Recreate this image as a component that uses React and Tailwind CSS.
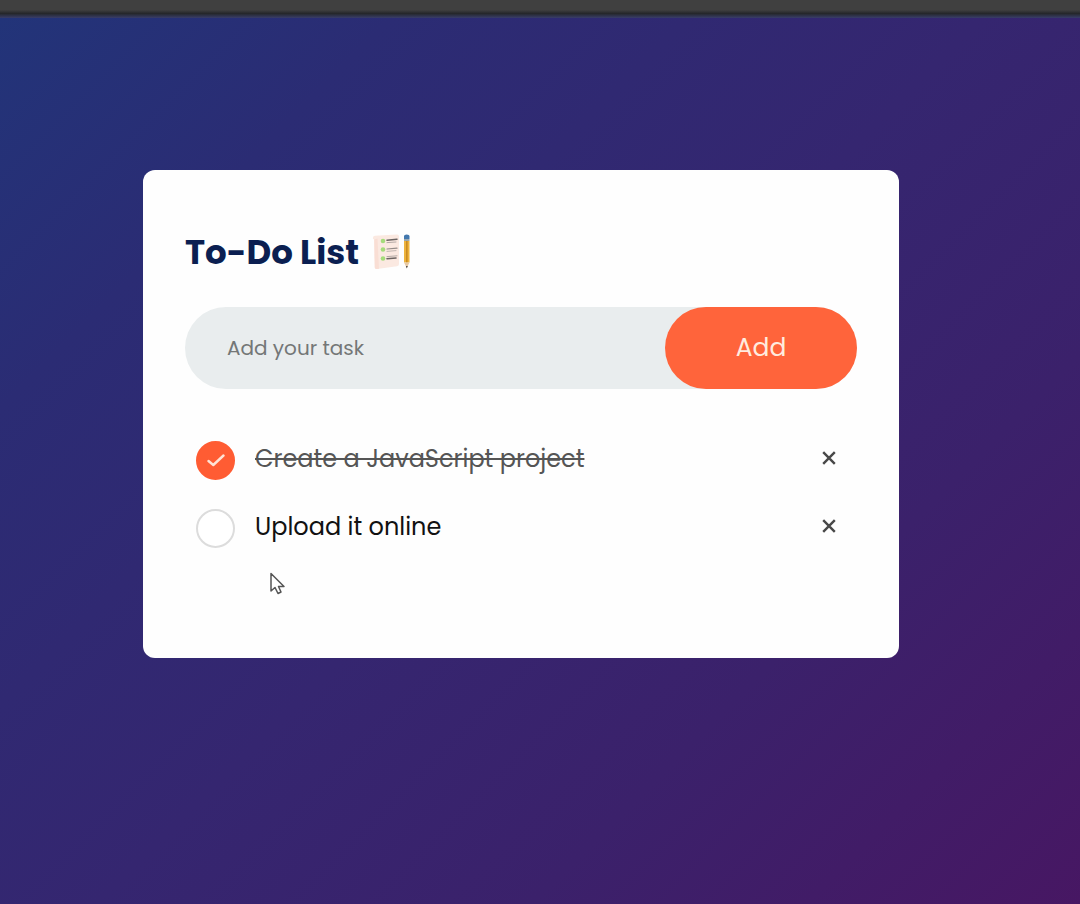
import { useState } from "react";

function ListIcon() {
  return (
    <svg viewBox="0 0 40 38" className="h-[38px] w-10 shrink-0" aria-hidden="true">
      <path d="M2 4.5Q2 3 4 2.8L26 1.6Q28 1.5 28 3.5V31Q28 33 26 33.3L6 36Q4 36.2 3.8 34.5L3.2 6.5Q1.5 6 2 4.5Z" fill="#fbe9e1" />
      <path d="M3.2 6.5L3.8 34.5Q4 36.2 6 36L8 35.7L6.5 5.5Z" fill="#f9ded4" />
      <g fill="#a5dc7b">
        <circle cx="12" cy="8" r="2.3" />
        <circle cx="12" cy="16.5" r="2.3" />
        <circle cx="12" cy="25.5" r="2.3" />
      </g>
      <g fill="none" strokeLinecap="round">
        <path d="M16 7.2L26 6.2" stroke="#6b6462" strokeWidth="1.6" />
        <path d="M16 9.6L25 9" stroke="#b5aaa6" strokeWidth="1" />
        <path d="M16 16L26 15.2" stroke="#948b88" strokeWidth="1.2" />
        <path d="M16 18.4L25 17.6" stroke="#c2b6b1" strokeWidth="1" />
        <path d="M16 25.8L25 25" stroke="#6b6462" strokeWidth="1.6" />
        <path d="M16 23.6L26 22.8" stroke="#b5aaa6" strokeWidth="1" />
      </g>
      <path d="M33 3Q33 1.5 35.7 1.5Q38.5 1.5 38.5 3V6H33Z" fill="#4378ae" />
      <path d="M33 6H38.5V8H33Z" fill="#9aa8b0" />
      <path d="M33 8H38.5V29.5H33Z" fill="#edb33c" />
      <path d="M35 8H36.6V29.5H35Z" fill="#c98b22" />
      <path d="M33 29.5H38.5L35.8 35Z" fill="#e7c9a4" />
      <path d="M34.9 33H36.8L35.8 35.5Z" fill="#4b4543" />
    </svg>
  );
}

function Task({ task, onToggle, onRemove }) {
  return (
    <li className="flex h-[68px] items-center pr-[18px] pl-[11px]">
      <label className="flex flex-1 cursor-pointer items-center gap-5">
        <span className="grid size-[39px] shrink-0 place-items-center">
          <input
            type="checkbox"
            checked={task.done}
            onChange={onToggle}
            className="col-start-1 row-start-1 size-[39px] appearance-none rounded-full border-2 border-[#dcdcdc] bg-white checked:border-[#ff5c33] checked:bg-[#ff5c33]"
          />
          {task.done && (
            <svg viewBox="0 0 18 14" className="pointer-events-none col-start-1 row-start-1 h-3.5 w-[18px]" fill="none" stroke="#ffe3d5" strokeWidth="2.4" strokeLinecap="round" strokeLinejoin="round" aria-hidden="true">
              <path d="M1.5 8L6.3 12L16.5 2.5" />
            </svg>
          )}
        </span>
        <span className={task.done ? "pb-0.5 text-2xl leading-8 text-[#555] line-through decoration-2" : "pb-0.5 text-2xl leading-8 text-[#111]"}>
          {task.text}
        </span>
      </label>
      <button type="button" aria-label={`Remove ${task.text}`} onClick={onRemove} className="grid h-8 w-5 place-items-center pb-1">
        <svg viewBox="0 0 14 14" className="size-3.5" stroke="#484848" strokeWidth="2.4" aria-hidden="true">
          <path d="M1.2 1.2L12.8 12.8M12.8 1.2L1.2 12.8" />
        </svg>
      </button>
    </li>
  );
}

export default function App() {
  const [tasks, setTasks] = useState([
    { id: 1, text: "Create a JavaScript project", done: true },
    { id: 2, text: "Upload it online", done: false },
  ]);
  const [draft, setDraft] = useState("");

  const addTask = (event) => {
    event.preventDefault();
    if (!draft.trim()) return;
    setTasks([...tasks, { id: Date.now(), text: draft.trim(), done: false }]);
    setDraft("");
  };

  return (
    <div className="flex min-h-screen flex-col font-['Poppins','Inter',sans-serif]">
      <div className="h-[18px] shrink-0 bg-linear-to-b from-[#404040] from-55% via-[#25272b] via-75% to-[#393d6a]" />
      <main className="flex flex-1 items-start justify-center bg-linear-[135deg,#223479,#2b2c74_20%,#352670_50%,#3b216b_72%,#471763] pt-[152px] pr-[38px]">
        <section className="relative w-full max-w-[756px] rounded-xl bg-[#fefefe] px-[42px] pt-[62px] pb-24">
          <h1 className="flex items-center gap-3 text-[34px] leading-10 font-bold text-[#0b1f51]">
            To-Do List
            <ListIcon />
          </h1>
          <form onSubmit={addTask} className="mt-[35px] flex h-[82px] rounded-full bg-[#e9edee]">
            <input
              type="text"
              aria-label="Add your task"
              placeholder="Add your task"
              value={draft}
              onChange={(event) => setDraft(event.target.value)}
              className="min-w-0 flex-1 bg-transparent pl-[42px] text-xl text-[#333] outline-none placeholder:text-[#747777]"
            />
            <button type="submit" className="w-48 rounded-full bg-[#ff643b] text-[25px] text-[#ffebdf]">
              Add
            </button>
          </form>
          <ul className="mt-[37px]">
            {tasks.map((task) => (
              <Task
                key={task.id}
                task={task}
                onToggle={() => setTasks(tasks.map((t) => (t.id === task.id ? { ...t, done: !t.done } : t)))}
                onRemove={() => setTasks(tasks.filter((t) => t.id !== task.id))}
              />
            ))}
          </ul>
          <svg viewBox="0 0 18 24" className="pointer-events-none absolute top-[402px] left-[126px] h-6 w-[18px]" aria-hidden="true">
            <path d="M2 1.5V19L6 15.5L9 21.5L12 20L9.5 14.5H15Z" fill="#fff" stroke="#555" strokeWidth="1.5" strokeLinejoin="round" />
          </svg>
        </section>
      </main>
    </div>
  );
}
